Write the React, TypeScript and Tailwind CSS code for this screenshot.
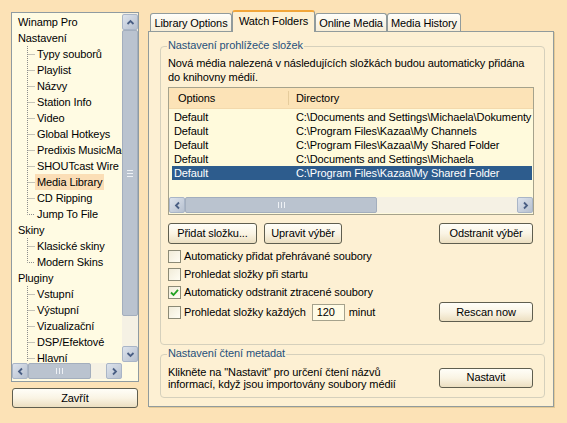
import React from 'react';

type TreeItem = { label: string; child?: boolean; last?: boolean; selected?: boolean };

const treeItems: TreeItem[] = [
  { label: 'Winamp Pro' },
  { label: 'Nastavení' },
  { label: 'Typy souborů', child: true },
  { label: 'Playlist', child: true },
  { label: 'Názvy', child: true },
  { label: 'Station Info', child: true },
  { label: 'Video', child: true },
  { label: 'Global Hotkeys', child: true },
  { label: 'Predixis MusicMagic', child: true },
  { label: 'SHOUTcast Wire', child: true },
  { label: 'Media Library', child: true, selected: true },
  { label: 'CD Ripping', child: true },
  { label: 'Jump To File', child: true, last: true },
  { label: 'Skiny' },
  { label: 'Klasické skiny', child: true },
  { label: 'Modern Skins', child: true, last: true },
  { label: 'Pluginy' },
  { label: 'Vstupní', child: true },
  { label: 'Výstupní', child: true },
  { label: 'Vizualizační', child: true },
  { label: 'DSP/Efektové', child: true },
  { label: 'Hlavní', child: true },
];

const folders = [
  'C:\\Documents and Settings\\Michaela\\Dokumenty',
  'C:\\Program Files\\Kazaa\\My Channels',
  'C:\\Program Files\\Kazaa\\My Shared Folder',
  'C:\\Documents and Settings\\Michaela',
  'C:\\Program Files\\Kazaa\\My Shared Folder',
];

const rotation = {
  up: '',
  right: 'rotate-90',
  down: 'rotate-180',
  left: '-rotate-90',
};

function ScrollButton({ dir }: { dir: keyof typeof rotation }) {
  return (
    <div className="flex h-[16px] w-[16px] shrink-0 items-center justify-center rounded-[2px] border border-[#a9b5c7] bg-linear-to-br from-[#dde3ec] to-[#b6c0cf]">
      <svg width="9" height="9" viewBox="0 0 9 9" className={rotation[dir]}>
        <path d="M1.5 6 L4.5 3 L7.5 6" fill="none" stroke="#4a5f84" strokeWidth="1.8" />
      </svg>
    </div>
  );
}

function TreeLine({ last }: { last?: boolean }) {
  return (
    <svg width="8" height="16" viewBox="0 0 8 16" className="shrink-0">
      <path
        d={last ? 'M0.5 0 V8.5 H8' : 'M0.5 0 V16 M0.5 8.5 H8'}
        fill="none"
        stroke="#8c8c8c"
        strokeWidth="1"
        strokeDasharray="1 1"
      />
    </svg>
  );
}

function XpButton({ children, className = '' }: { children: React.ReactNode; className?: string }) {
  return (
    <div
      className={`flex shrink-0 items-center justify-center rounded-[3px] border border-[#5f5e4f] bg-linear-to-b from-[#fffef8] via-[#faf4e4] to-[#ecdfc1] text-[11px] text-black ${className}`}
    >
      {children}
    </div>
  );
}

function Checkbox({ checked }: { checked?: boolean }) {
  return (
    <div className="flex h-[13px] w-[13px] shrink-0 items-center justify-center border border-[#8b8a76] bg-linear-to-br from-[#f1ecd9] to-[#fffdf3]">
      {checked ? (
        <svg width="9" height="9" viewBox="0 0 9 9">
          <path d="M1 4.5 L3.5 7 L8 1.8" fill="none" stroke="#21a121" strokeWidth="1.8" />
        </svg>
      ) : null}
    </div>
  );
}

function GroupBox({
  title,
  className = '',
  children,
}: {
  title: string;
  className?: string;
  children: React.ReactNode;
}) {
  return (
    <div className={`relative ml-[11px] w-[385px] rounded-[4px] border border-[#d5d0bc] ${className}`}>
      <span className="absolute -top-[8px] left-[6px] bg-[#fdf0d3] px-[1px] text-[11px] leading-[13px] text-[#27507b]">
        {title}
      </span>
      {children}
    </div>
  );
}

function Tree() {
  return (
    <div className="flex h-[370px] w-[128px] flex-col border border-[#8f9ba1] bg-[#fffbe3]">
      <div className="flex min-h-0 flex-1">
        <div className="min-w-0 flex-1 overflow-hidden pt-[1px]">
          {treeItems.map((item, i) =>
            item.child ? (
              <div key={i} className="flex h-[16px] items-center whitespace-nowrap pl-[15px]">
                <TreeLine last={item.last} />
                <span className={`px-[2px] leading-[16px] ${item.selected ? 'bg-[#fbdeb6]' : ''}`}>{item.label}</span>
              </div>
            ) : (
              <div key={i} className="h-[16px] whitespace-nowrap pl-[6px] leading-[16px]">
                {item.label}
              </div>
            ),
          )}
        </div>
        <div className="flex w-[16px] flex-col bg-[#f5f1e4]">
          <div className="pt-[1px]">
            <ScrollButton dir="up" />
          </div>
          <div className="flex h-[286px] flex-col items-center justify-center gap-[2px] rounded-[2px] border border-[#a3aebd] bg-[#bac3cf]">
            <div className="h-px w-[6px] bg-[#eef1f5]" />
            <div className="h-px w-[6px] bg-[#eef1f5]" />
            <div className="h-px w-[6px] bg-[#eef1f5]" />
          </div>
          <div className="flex-1" />
          <ScrollButton dir="down" />
        </div>
      </div>
      <div className="flex h-[19px] items-start pt-[1px]">
        <div className="flex w-[110px] bg-[#f5f1e4]">
          <ScrollButton dir="left" />
          <div className="flex h-[16px] w-[63px] items-center justify-center gap-[2px] rounded-[2px] border border-[#a3aebd] bg-[#bac3cf]">
            <div className="h-[6px] w-px bg-[#eef1f5]" />
            <div className="h-[6px] w-px bg-[#eef1f5]" />
            <div className="h-[6px] w-px bg-[#eef1f5]" />
          </div>
          <div className="flex-1" />
          <ScrollButton dir="right" />
        </div>
      </div>
    </div>
  );
}

function FolderList() {
  return (
    <div className="mt-[3px] flex h-[128px] w-[366px] flex-col overflow-hidden border border-[#a5a28c] bg-[#fffadc]">
      <div className="flex h-[21px] shrink-0 items-center border-b border-[#f3d9ac] bg-[#fce3b7]">
        <div className="w-[119px] shrink-0 pl-[9px]">Options</div>
        <div className="h-[14px] w-px shrink-0 bg-[#e6cc9c]" />
        <div className="pl-[7px]">Directory</div>
      </div>
      <div className="mt-[1px] flex flex-col pl-[3px] pr-[1px]">
        {folders.map((dir, i) => {
          const selected = i === folders.length - 1;
          return (
            <div
              key={i}
              className={`flex h-[14px] items-center overflow-hidden whitespace-nowrap leading-[14px] ${selected ? 'bg-[#2d5c8d] text-white' : ''}`}
            >
              <div className="w-[122px] shrink-0 pl-[2px]">Default</div>
              <div className="pl-[2px]">{dir}</div>
            </div>
          );
        })}
      </div>
      <div className="mt-auto mb-[1px] flex bg-[#f5f1e4]">
        <ScrollButton dir="left" />
        <div className="flex h-[16px] w-[192px] items-center justify-center gap-[2px] rounded-[2px] border border-[#a3aebd] bg-[#bac3cf]">
          <div className="h-[6px] w-px bg-[#eef1f5]" />
          <div className="h-[6px] w-px bg-[#eef1f5]" />
          <div className="h-[6px] w-px bg-[#eef1f5]" />
        </div>
        <div className="flex-1" />
        <ScrollButton dir="right" />
      </div>
    </div>
  );
}

const tabs = [
  { label: 'Library Options', width: 'w-[82px]' },
  { label: 'Watch Folders', width: 'w-[83px]', active: true },
  { label: 'Online Media', width: 'w-[72px]' },
  { label: 'Media History', width: 'w-[74px]' },
];

export default function App() {
  return (
    <div className="flex h-[423px] w-[567px] bg-[#fce2b6] font-['Liberation_Sans',Arial,sans-serif] text-[11px] tracking-[-0.1px] text-black">
      <div className="flex flex-col pl-[11px] pt-[12px]">
        <Tree />
        <XpButton className="ml-[1px] mt-[6px] h-[20px] w-[126px]">Zavřít</XpButton>
      </div>

      <div className="ml-[9px] flex w-[406px] flex-col pt-[10px]">
        <div className="-mb-px flex h-[22px] items-end pl-[2px]">
          {tabs.map((tab) =>
            tab.active ? (
              <div
                key={tab.label}
                className={`relative z-10 flex h-[22px] ${tab.width} items-center justify-center rounded-t-[3px] border-x border-t-2 border-[#919b9c] border-t-[#f2a63a] bg-[#fdf0d3] pb-[1px]`}
              >
                {tab.label}
              </div>
            ) : (
              <div
                key={tab.label}
                className={`flex h-[19px] ${tab.width} items-center justify-center rounded-t-[3px] border border-b-0 border-[#919b9c] bg-linear-to-b from-[#fffefa] to-[#f6ecd5]`}
              >
                {tab.label}
              </div>
            ),
          )}
        </div>

        <div className="flex h-[376px] flex-col border border-[#919b9c] bg-[#fdf0d3] shadow-[1px_1px_0_#e3c996]">
          <GroupBox title="Nastavení prohlížeče složek" className="mt-[14px] h-[299px]">
            <div className="pl-[7px] pt-[9px]">
              <p className="leading-[14px]">
                Nová média nalezená v následujících složkách budou automaticky přidána
                <br />
                do knihovny médií.
              </p>
              <FolderList />
              <div className="mt-[8px] flex items-center pr-[11px]">
                <XpButton className="h-[21px] w-[89px]">Přidat složku...</XpButton>
                <XpButton className="ml-[7px] h-[21px] w-[78px]">Upravit výběr</XpButton>
                <XpButton className="ml-auto h-[21px] w-[94px]">Odstranit výběr</XpButton>
              </div>
              <div className="mt-[3px] flex flex-col pr-[11px]">
                <label className="flex h-[18px] items-center gap-[3px]">
                  <Checkbox />
                  Automaticky přidat přehrávané soubory
                </label>
                <label className="flex h-[18px] items-center gap-[3px]">
                  <Checkbox />
                  Prohledat složky při startu
                </label>
                <label className="flex h-[18px] items-center gap-[3px]">
                  <Checkbox checked />
                  Automaticky odstranit ztracené soubory
                </label>
                <div className="flex h-[22px] items-center">
                  <Checkbox />
                  <span className="ml-[3px]">Prohledat složky každých</span>
                  <div className="ml-[6px] flex h-[17px] w-[33px] items-center border border-[#a5a28c] bg-[#fffbe5] pl-[4px]">
                    120
                  </div>
                  <span className="ml-[4px]">minut</span>
                  <XpButton className="ml-auto h-[20px] w-[94px]">Rescan now</XpButton>
                </div>
              </div>
            </div>
          </GroupBox>

          <GroupBox title="Nastavení čtení metadat" className="mt-[9px] flex h-[44px] items-center justify-between pl-[7px] pr-[11px] pt-[3px]">
            <p className="leading-[12px]">
              Klikněte na "Nastavit" pro určení čtení názvů
              <br />
              informací, když jsou importovány soubory médií
            </p>
            <XpButton className="h-[20px] w-[94px]">Nastavit</XpButton>
          </GroupBox>
        </div>
      </div>
    </div>
  );
}
